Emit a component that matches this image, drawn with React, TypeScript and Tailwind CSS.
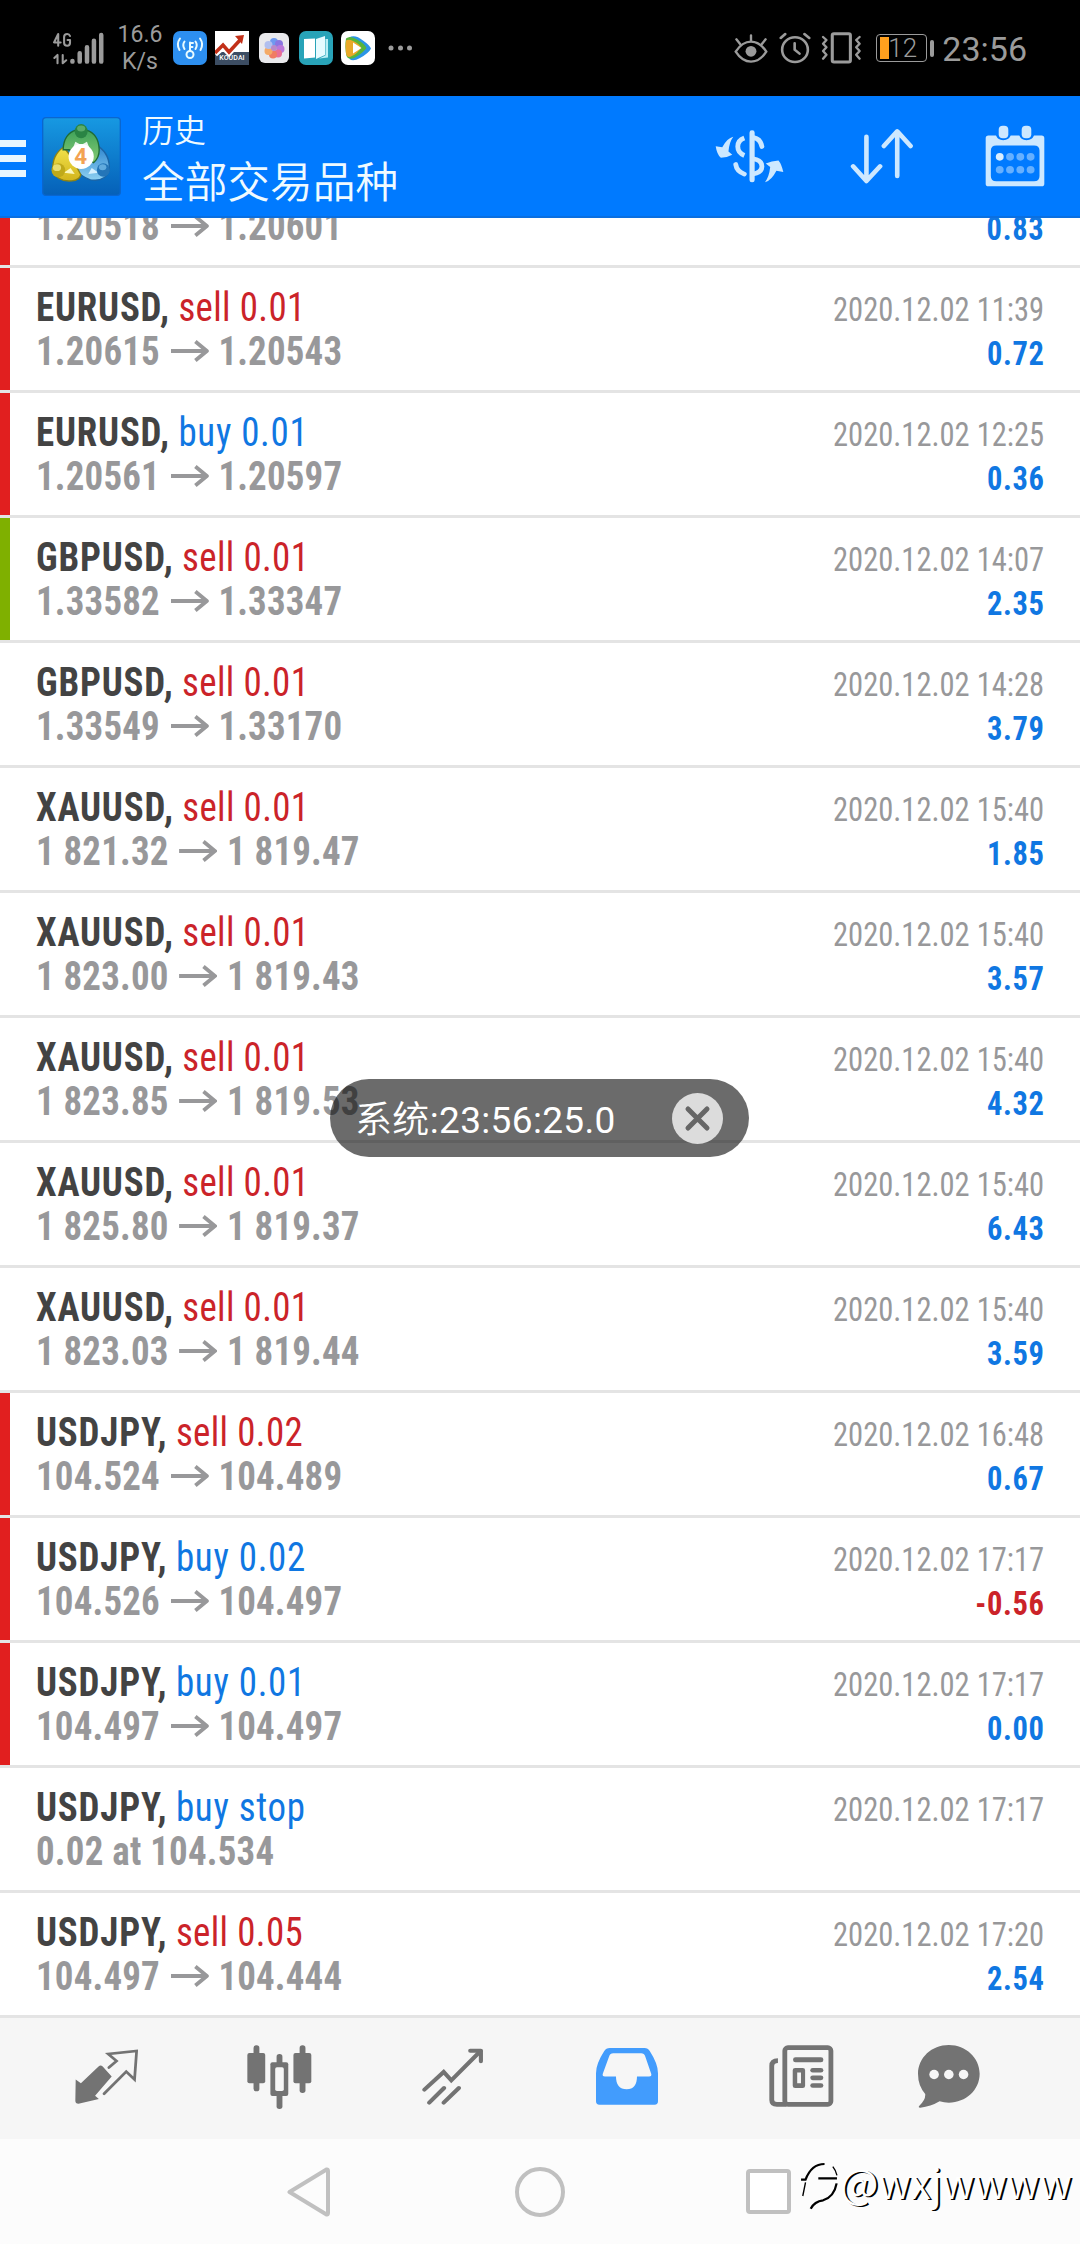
import type { ReactNode } from "react";

type Deal = {
  symbol?: string;
  side?: "buy" | "sell";
  volume?: string;
  from?: string;
  to?: string;
  note?: string;
  time?: string;
  profit?: string;
  mark?: "red" | "green";
};

const deals: Deal[] = [
  { from: "1.20518", to: "1.20601", profit: "0.83", mark: "red" },
  { symbol: "EURUSD", side: "sell", volume: "0.01", from: "1.20615", to: "1.20543", time: "2020.12.02 11:39", profit: "0.72", mark: "red" },
  { symbol: "EURUSD", side: "buy", volume: "0.01", from: "1.20561", to: "1.20597", time: "2020.12.02 12:25", profit: "0.36", mark: "red" },
  { symbol: "GBPUSD", side: "sell", volume: "0.01", from: "1.33582", to: "1.33347", time: "2020.12.02 14:07", profit: "2.35", mark: "green" },
  { symbol: "GBPUSD", side: "sell", volume: "0.01", from: "1.33549", to: "1.33170", time: "2020.12.02 14:28", profit: "3.79" },
  { symbol: "XAUUSD", side: "sell", volume: "0.01", from: "1 821.32", to: "1 819.47", time: "2020.12.02 15:40", profit: "1.85" },
  { symbol: "XAUUSD", side: "sell", volume: "0.01", from: "1 823.00", to: "1 819.43", time: "2020.12.02 15:40", profit: "3.57" },
  { symbol: "XAUUSD", side: "sell", volume: "0.01", from: "1 823.85", to: "1 819.53", time: "2020.12.02 15:40", profit: "4.32" },
  { symbol: "XAUUSD", side: "sell", volume: "0.01", from: "1 825.80", to: "1 819.37", time: "2020.12.02 15:40", profit: "6.43" },
  { symbol: "XAUUSD", side: "sell", volume: "0.01", from: "1 823.03", to: "1 819.44", time: "2020.12.02 15:40", profit: "3.59" },
  { symbol: "USDJPY", side: "sell", volume: "0.02", from: "104.524", to: "104.489", time: "2020.12.02 16:48", profit: "0.67", mark: "red" },
  { symbol: "USDJPY", side: "buy", volume: "0.02", from: "104.526", to: "104.497", time: "2020.12.02 17:17", profit: "-0.56", mark: "red" },
  { symbol: "USDJPY", side: "buy", volume: "0.01", from: "104.497", to: "104.497", time: "2020.12.02 17:17", profit: "0.00", mark: "red" },
  { symbol: "USDJPY", side: "buy", volume: "stop", note: "0.02 at 104.534", time: "2020.12.02 17:17" },
  { symbol: "USDJPY", side: "sell", volume: "0.05", from: "104.497", to: "104.444", time: "2020.12.02 17:20", profit: "2.54" },
];

function Icon({ box, className, children }: { box: string; className: string; children: ReactNode }) {
  return (
    <svg viewBox={box} preserveAspectRatio="none" fill="none" className={`block shrink-0 ${className}`}>
      {children}
    </svg>
  );
}

function StatusBar() {
  return (
    <div className="flex h-24 shrink-0 items-center bg-black text-[#9b9b9b]">
      <Icon box="155 95 147 98" className="ml-[53px] h-[33px] w-[51px]">
        <g stroke="#9b9b9b" strokeWidth="6" strokeLinejoin="round" strokeLinecap="round">
          <path d="M170 136V101L158 126H177" />
          <path d="M204 107Q202 101 196 101Q187 101 187 110V127Q187 136 196 136Q204 136 204 127V119H197" />
          <path d="M159 172L168 163V188M183 163V188L193 179" />
        </g>
        <g stroke="#9b9b9b" strokeWidth="13" strokeLinecap="round">
          <path d="M211 181V183M232 158V183M253 140V183M273 121V183M294 104V183" />
        </g>
      </Icon>
      <div className="ml-[10px] w-[52px] text-center text-[23px] leading-[27px]">
        <div>16.6</div>
        <div>K/s</div>
      </div>
      <Icon box="0 0 34 34" className="ml-[7px] size-[34px]">
        <rect width="34" height="34" rx="7" fill="#2d8ff0" />
        <g stroke="#e9fbff" strokeWidth="2" strokeLinecap="round">
          <circle cx="17" cy="23.500" r="3.500" />
          <path d="M17 20V11.500M17 12H20M17 16H19.500" />
          <path d="M11.500 10.500Q9 14 11.500 18M22.500 10.500Q25 14 22.500 18" />
          <path d="M7 7.500Q3 13 6.500 19M27 7.500Q31 13 27.500 19" />
        </g>
      </Icon>
      <div className="relative ml-2 size-[34px] bg-white">
        <Icon box="0 0 34 34" className="size-[34px]">
          <path d="M0 21H34V34H0Z" fill="#3c4d63" />
          <path d="M0 23L8 16L14 22L26 9" stroke="#fff" strokeWidth="6" />
          <path d="M0 22L8 14L14 21L26 8" stroke="#c23018" strokeWidth="3.500" />
          <path d="M20 5L29 4L27 13Z" fill="#c23018" />
        </Icon>
        <span className="absolute inset-x-0 bottom-[3px] text-center text-[7px] leading-[8px] font-medium tracking-[0.1px] text-white">KOUDAI</span>
      </div>
      <Icon box="0 0 30 30" className="ml-[10px] size-[30px]">
        <rect width="30" height="30" rx="6" fill="#e9e9ec" />
        <g opacity="0.85">
          <circle cx="15" cy="9" r="4" fill="#5a8cf0" />
          <circle cx="20" cy="11" r="4" fill="#7a63e0" />
          <circle cx="21.500" cy="16" r="4" fill="#b465d8" />
          <circle cx="19" cy="20.500" r="4" fill="#ea5a86" />
          <circle cx="14" cy="21.500" r="4" fill="#f2694a" />
          <circle cx="9.500" cy="18" r="4" fill="#f7a050" />
          <circle cx="9.500" cy="12" r="4" fill="#a8b8f0" />
        </g>
        <circle cx="15" cy="15" r="3" fill="#b98ac8" />
      </Icon>
      <Icon box="0 0 34 34" className="ml-[10px] size-[34px]">
        <rect width="34" height="34" rx="7" fill="#28a3b8" />
        <path d="M5 8L16 7.500V26.500L5 27.500Z" fill="#fff" />
        <path d="M17 8L26 5V24L17 28Z" fill="#e6fbff" />
        <path d="M26.500 8H29V26.500L20 27.500L26.500 24.500Z" fill="#b9eef5" />
      </Icon>
      <Icon box="0 0 34 34" className="ml-2 size-[34px]">
        <rect width="34" height="34" rx="7" fill="#fff" />
        <path d="M8 6.500Q14 3 22 9.500Q29 14.500 30 17.500Q28 22 19 27Q12 31 8.500 28Z" fill="#2b95e6" />
        <path d="M5 7.500Q9 4 16 8.500Q24 13 25.500 17Q22 22 14 26.500Q7 29.500 5.500 25Q3.500 16 5 7.500Z" fill="#58b53a" />
        <path d="M5 9.500Q8 8 12 10Q19 13 20 17Q17 22 11 25Q6 28 5 22Q4 15 5 9.500Z" fill="#e9a92a" />
        <path d="M12 11.500L20.500 17L12 22.500Z" fill="#fff" />
      </Icon>
      <Icon box="0 0 24 6" className="ml-[13px] h-[6px] w-[24px]">
        <g fill="#9b9b9b">
          <circle cx="3" cy="3" r="2.500" />
          <circle cx="12.500" cy="3" r="2.500" />
          <circle cx="21.500" cy="3" r="2.500" />
        </g>
      </Icon>
      <div className="ml-auto flex items-center pr-[53px]">
        <Icon box="564 98 100 93" className="h-[31px] w-[34px]">
          <g stroke="#9b9b9b" strokeWidth="7" strokeLinecap="round">
            <path d="M569 154Q588 124 614 124Q640 124 659 154Q640 184 614 184Q588 184 569 154Z" />
            <path d="M614 105V122M571 117L582 131M657 117L646 131" />
          </g>
          <circle cx="614" cy="153" r="16" fill="#9b9b9b" />
        </Icon>
        <Icon box="695 96 92 96" className="ml-[11px] h-8 w-[32px]">
          <g stroke="#9b9b9b" strokeWidth="7.500" strokeLinecap="round">
            <circle cx="741" cy="149" r="37" />
            <path d="M740 130V149L754 161" />
            <path d="M700 114L713 102M782 114L768 102" />
          </g>
        </Icon>
        <Icon box="816 96 120 96" className="ml-[10px] h-8 w-[41px]">
          <g stroke="#9b9b9b">
            <rect x="849" y="101" width="53" height="85" rx="5" strokeWidth="9" />
            <path d="M822 111L832 120L822 131L832 142L822 153L832 164L822 176M929 111L919 120L929 131L919 142L929 153L919 164L929 176" strokeWidth="7" strokeLinejoin="round" strokeLinecap="round" />
          </g>
        </Icon>
        <div className="ml-[14px] flex h-7 w-[51px] items-center rounded-[4px] border border-[#9b9b9b] pl-[3px]">
          <div className="h-[22px] w-[9px] bg-[#ffa01e]" />
          <span className="-ml-px text-[26px] leading-[27px] font-light">12</span>
        </div>
        <div className="ml-[3px] h-[17px] w-1 rounded-sm bg-[#9b9b9b]" />
        <span className="mt-0.5 ml-[8px] text-[34px] leading-[34px]">23:56</span>
      </div>
    </div>
  );
}

function AppLogo() {
  return (
    <Icon box="20 25 232 234" className="ml-[16px] size-[79px]">
      <defs>
        <linearGradient id="tile" x1="0" y1="0" x2="0" y2="1">
          <stop offset="0" stopColor="#1799e2" />
          <stop offset="1" stopColor="#0560b8" />
        </linearGradient>
        <linearGradient id="green" x1="0" y1="0" x2="0" y2="1">
          <stop offset="0" stopColor="#3fa25a" />
          <stop offset="1" stopColor="#86cc74" />
        </linearGradient>
        <linearGradient id="yellow" x1="0" y1="0" x2="0" y2="1">
          <stop offset="0" stopColor="#f2e34c" />
          <stop offset="1" stopColor="#d2b41c" />
        </linearGradient>
        <linearGradient id="blue" x1="0" y1="0" x2="0" y2="1">
          <stop offset="0" stopColor="#2f86cf" />
          <stop offset="1" stopColor="#8ed0f2" />
        </linearGradient>
      </defs>
      <rect x="22" y="27" width="228" height="230" rx="10" fill="url(#tile)" stroke="#0a66cf" strokeWidth="4" />
      <path d="M186 112Q222 138 217 185Q205 218 162 211Q130 200 120 176L160 150Z" fill="url(#blue)" stroke="#1b65a6" strokeWidth="4" />
      <path d="M84 114Q48 138 52 185Q66 218 108 214Q130 212 134 196L110 150Z" fill="url(#yellow)" stroke="#8f8313" strokeWidth="4" />
      <path d="M82 122Q84 74 120 64H150Q186 74 188 122Q188 146 172 160L100 122Z" fill="url(#green)" stroke="#1f6b35" strokeWidth="4" />
      <path d="M118 98L135 108L152 98L158 114H112Z" fill="#e9f6ec" />
      <path d="M84 190L104 176L116 194Z" fill="#fbf7c0" />
      <path d="M186 190L166 176L156 194Z" fill="#d6f0ff" />
      <ellipse cx="135" cy="67" rx="19" ry="21" fill="#2a8444" />
      <ellipse cx="135" cy="59" rx="12" ry="9" fill="#7cc686" opacity="0.6" />
      <ellipse cx="68" cy="183" rx="20" ry="21" fill="#bfa91a" />
      <ellipse cx="64" cy="175" rx="12" ry="10" fill="#f4ea86" opacity="0.8" />
      <ellipse cx="200" cy="182" rx="19" ry="20" fill="#2475b8" />
      <ellipse cx="198" cy="174" rx="11" ry="9" fill="#7ec2ee" opacity="0.7" />
      <circle cx="135" cy="142" r="37" fill="#fff" />
      <text x="134" y="165" textAnchor="middle" fontSize="66" fontWeight="700" fill="#f3a352">4</text>
    </Icon>
  );
}

function Header() {
  return (
    <div className="flex h-[122px] shrink-0 items-center border-b-2 border-[#0a6fe0] bg-[#007aff]">
      <div className="mt-1 flex w-[26px] flex-col gap-2">
        <div className="h-[7px] bg-[#e8f6ff]" />
        <div className="h-[7px] bg-[#e8f6ff]" />
        <div className="h-[7px] bg-[#e8f6ff]" />
      </div>
      <AppLogo />
      <div className="-mt-px ml-[21px] text-[#effaff] [font-family:'Noto_Sans_CJK_SC',sans-serif] [font-weight:350]">
        <div className="text-[32px] leading-[47px]">历史</div>
        <div className="-mt-px text-[42.7px] leading-[56px]">全部交易品种</div>
      </div>
      <div className="ml-auto flex items-center pr-[35px]">
        <Icon box="510 387 200 160" className="h-[53px] w-[69px]">
          <g fill="#cde8ff">
            <path d="M563 407Q545 411 531 439L512 436Q516 462 527 471Q545 471 560 462L549 452Q551 424 563 407Z" />
            <path d="M655 545Q674 539 688 510L708 514Q703 490 694 479Q674 480 657 488L670 499Q667 528 655 545Z" />
            <rect x="610" y="388" width="15" height="157" rx="7" />
          </g>
          <g stroke="#cde8ff" strokeWidth="14">
            <path d="M595 411Q576 418 576 437Q576 456 595 464" />
            <path d="M595 520Q573 512 570 491" strokeLinecap="round" />
            <path d="M622 410Q642 414 646 437" strokeLinecap="round" />
            <path d="M620 474Q646 478 646 497Q646 515 620 520" />
          </g>
        </Icon>
        <Icon box="900 385 187 168" className="ml-[66px] h-[56px] w-[64px]">
          <path d="M948 411V540M909 500L948 544L988 500M1038 529V397M999 439L1038 395L1077 439" stroke="#cde8ff" strokeWidth="13.500" strokeLinecap="round" strokeLinejoin="round" />
        </Icon>
        <Icon box="1290 373 175 187" className="ml-[71px] h-[62px] w-[60px]">
          <path d="M1300 405H1322Q1328 419 1343 419Q1359 419 1365 405H1390Q1396 419 1411 419Q1427 419 1433 405H1455Q1463 405 1463 413V550Q1463 558 1455 558H1300Q1292 558 1292 550V413Q1292 405 1300 405ZM1323 435Q1307 435 1307 451V527Q1307 543 1323 543H1433Q1449 543 1449 527V451Q1449 435 1433 435Z" fill="#cde8ff" fillRule="evenodd" />
          <rect x="1326" y="371" width="36" height="46" rx="16" fill="#007aff" />
          <rect x="1393" y="371" width="36" height="46" rx="16" fill="#007aff" />
          <rect x="1330" y="375" width="28" height="38" rx="12" fill="#cde8ff" />
          <rect x="1397" y="375" width="28" height="38" rx="12" fill="#cde8ff" />
          <circle cx="1333" cy="469" r="11.500" fill="#d9eeff" />
          <g fill="#66b0ff">
            <circle cx="1363" cy="469" r="11.500" />
            <circle cx="1393" cy="469" r="11.500" />
            <circle cx="1423" cy="469" r="11.500" />
            <circle cx="1333" cy="508" r="11.500" />
            <circle cx="1363" cy="508" r="11.500" />
            <circle cx="1393" cy="508" r="11.500" />
            <circle cx="1423" cy="508" r="11.500" />
          </g>
        </Icon>
      </div>
    </div>
  );
}

const markColor = { red: "bg-[#e11f1f]", green: "bg-[#7fb000]" };

function DealRow({ deal }: { deal: Deal }) {
  const sideStyle = deal.side === "sell" ? "text-[#cb2329] tracking-[0.4px]" : "text-[#1077e2] tracking-[0.8px]";
  const profitColor = deal.profit?.startsWith("-") ? "text-[#cb2329]" : "text-[#1077e2]";
  return (
    <div className="flex h-[125px] shrink-0 border-b-[3px] border-[#e4e4e4] bg-white [font-family:'Roboto_Condensed','Roboto',sans-serif]">
      <div className={`w-[10px] ${deal.mark ? markColor[deal.mark] : ""}`} />
      <div className="ml-[26px] origin-left scale-x-[0.9] pt-[17px] text-[41px] leading-[44px] whitespace-nowrap">
        <div className="h-11">
          {deal.symbol && (
            <>
              <span className="font-bold tracking-[0.9px] text-[#434343]">{deal.symbol},</span>{" "}
              <span className={sideStyle}>
                {deal.side} {deal.volume}
              </span>
            </>
          )}
        </div>
        {deal.note ? (
          <div className="font-bold tracking-[0.25px] text-[#98989a]">{deal.note}</div>
        ) : (
          <div className="flex items-center font-bold tracking-[0.2px] text-[#98989a]">
            <span>{deal.from}</span>
            <Icon box="0 0 38 22" className="mr-[11px] ml-[12px] h-[22px] w-[42px]">
              <path d="M0 11H36M24.500 1.500L36 11L24.500 20.500" stroke="#98989a" strokeWidth="3.800" />
            </Icon>
            <span>{deal.to}</span>
          </div>
        )}
      </div>
      <div className="ml-auto origin-right scale-x-[0.925] pt-5 pr-[39px] text-right text-[33px] leading-[44px] whitespace-nowrap">
        <div className="h-11 text-[#98989a]">{deal.time}</div>
        <div className={`-mr-[0.6px] font-bold tracking-[0.7px] ${profitColor}`}>{deal.profit}</div>
      </div>
    </div>
  );
}

function Toast() {
  return (
    <div className="absolute top-[1079px] left-[330px] flex h-[78px] w-[419px] items-center rounded-full bg-black/58 pr-[26px] pl-[25px] text-white">
      <span className="mt-px text-[37px] leading-[44px] tracking-[0.35px] whitespace-nowrap">
        <span className="[font-family:'Noto_Sans_CJK_SC',sans-serif] [font-weight:350]">系统</span>:23:56:25.0
      </span>
      <Icon box="0 0 51 51" className="ml-auto size-[51px]">
        <circle cx="25.500" cy="25.500" r="25.500" fill="#dcdcdc" />
        <path d="M16 16L35 35M35 16L16 35" stroke="#666" strokeWidth="5" strokeLinecap="round" />
      </Icon>
    </div>
  );
}

function TabBar() {
  return (
    <div className="flex h-[121px] shrink-0 bg-[#f6f6f6] pl-5">
      <div className="flex w-[173px] justify-center pt-[31px]">
        <Icon box="222 148 182 166" className="h-[55px] w-[63px]">
          <path d="M320 204L342 184L318 163L400 154L394 240L370 216L306 283" stroke="#737373" strokeWidth="8" strokeLinejoin="miter" strokeLinecap="round" />
          <path d="M224 240L239 251L290 201Q296 195 302 201L328 231L280 289L291 299L232 313Q223 313 223 304Z" fill="#737373" />
        </Icon>
      </div>
      <div className="flex w-[173px] justify-center pt-[27px]">
        <Icon box="719 134 189 192" className="h-16 w-[65px]">
          <g fill="#737373">
            <rect x="738" y="135" width="17" height="138" rx="8" />
            <rect x="872" y="135" width="17" height="143" rx="8" />
            <rect x="720" y="158" width="52" height="91" rx="6" />
            <rect x="854" y="158" width="52" height="91" rx="6" />
            <rect x="805" y="161" width="17" height="165" rx="8" />
            <rect x="787" y="186" width="52" height="101" rx="6" />
          </g>
          <rect x="801" y="201" width="25" height="71" rx="5" fill="#f6f6f6" />
        </Icon>
      </div>
      <div className="flex w-[174px] justify-center pt-[30px]">
        <Icon box="1226 143 180 171" className="h-[57px] w-[62px]">
          <g stroke="#737373" strokeWidth="12" strokeLinecap="round" strokeLinejoin="round">
            <path d="M1233 268L1289 215L1311 240L1396 152" strokeLinejoin="miter" />
            <path d="M1247 307L1290 263M1289 307L1333 263M1366 151H1397V183" />
          </g>
          <path d="M1380 150H1398V168Z" fill="#737373" />
        </Icon>
      </div>
      <div className="flex w-[174px] justify-center pt-[30px]">
        <Icon box="163 143 180 170" className="h-[57px] w-[62px]">
          <path d="M203 143H304Q314 143 319 152Q343 190 343 218V302Q343 312 333 312H173Q163 312 163 302V218Q163 190 187 152Q192 143 203 143ZM213 159Q204 159 201 168L183 219Q180 228 189 228H221Q221 266 252 266Q282 266 282 228H317Q326 228 323 219L306 168Q303 159 294 159Z" fill="#429cfd" fillRule="evenodd" />
        </Icon>
      </div>
      <div className="flex w-[174px] justify-center pt-[27px]">
        <Icon box="665 134 189 187" className="h-[62px] w-[65px]">
          <g stroke="#737373" strokeWidth="14">
            <rect x="711" y="142" width="134" height="171" rx="9" />
            <path d="M691 181Q673 181 673 197V300Q673 313 688 313H716" />
          </g>
          <g fill="#737373">
            <rect x="735" y="171" width="88" height="15" rx="7" />
            <rect x="785" y="203" width="38" height="14" rx="7" />
            <rect x="785" y="226" width="38" height="14" rx="7" />
            <rect x="785" y="249" width="38" height="14" rx="7" />
            <path d="M741 203H763Q770 203 770 210V257Q770 264 763 264H741Q734 264 734 257V210Q734 203 741 203ZM747 217V249H758V217Z" fillRule="evenodd" />
          </g>
        </Icon>
      </div>
      <div className="flex w-[122px] justify-center pt-[27px]">
        <Icon box="1098 134 181 188" className="h-[63px] w-[62px]">
          <path d="M1188 134C1238 134 1278 172 1278 220C1278 268 1238 306 1188 306Q1174 306 1161 302Q1135 318 1105 321Q1097 321 1102 315Q1121 297 1119 280Q1098 256 1098 220C1098 172 1138 134 1188 134Z" fill="#737373" />
          <g fill="#f6f6f6">
            <circle cx="1145" cy="222" r="14" />
            <circle cx="1188" cy="222" r="14" />
            <circle cx="1231" cy="222" r="14" />
          </g>
        </Icon>
      </div>
    </div>
  );
}

function SystemNav() {
  return (
    <div className="relative flex h-[105px] shrink-0 items-center bg-[#fcfcfc] pl-[287px]">
      <Icon box="0 0 44 50" className="h-[50px] w-[44px]">
        <path d="M2.500 25L39.500 2.500Q41 2 41 4V46Q41 48 39.500 47.500Z" stroke="#c0c0c0" strokeWidth="4" strokeLinejoin="round" />
      </Icon>
      <div className="ml-[184px] size-[50px] rounded-full border-4 border-[#c0c0c0]" />
      <div className="ml-[181px] size-[45px] rounded-[4px] border-4 border-[#c0c0c0] bg-white" />
      <div className="absolute top-[23px] left-[800px] flex items-start">
        <Icon box="755 488 110 144" className="h-[48px] w-[38px]">
          <path d="M758 541H771Q788 494 826 494M808 537H862M861 552Q854 592 822 603Q797 606 786 628" stroke="#000" strokeWidth="6.500" />
          <path d="M771 549L763 590M862 528Q858 512 850 502" stroke="#000" strokeWidth="4" />
        </Icon>
        <span className="-mt-[5px] ml-[2px] text-[41px] leading-[48px] text-white [font-family:'Noto_Sans_CJK_SC',sans-serif] [font-weight:350] [text-shadow:2px_1px_0_#000]">@wxjwwww</span>
      </div>
    </div>
  );
}

export default function App() {
  return (
    <div className="relative flex h-[2244px] w-[1080px] flex-col overflow-hidden bg-white [font-family:'Roboto',sans-serif]">
      <StatusBar />
      <Header />
      <div className="flex h-[1800px] shrink-0 flex-col justify-end overflow-hidden">
        {deals.map((deal, i) => (
          <DealRow key={i} deal={deal} />
        ))}
      </div>
      <TabBar />
      <SystemNav />
      <Toast />
    </div>
  );
}
